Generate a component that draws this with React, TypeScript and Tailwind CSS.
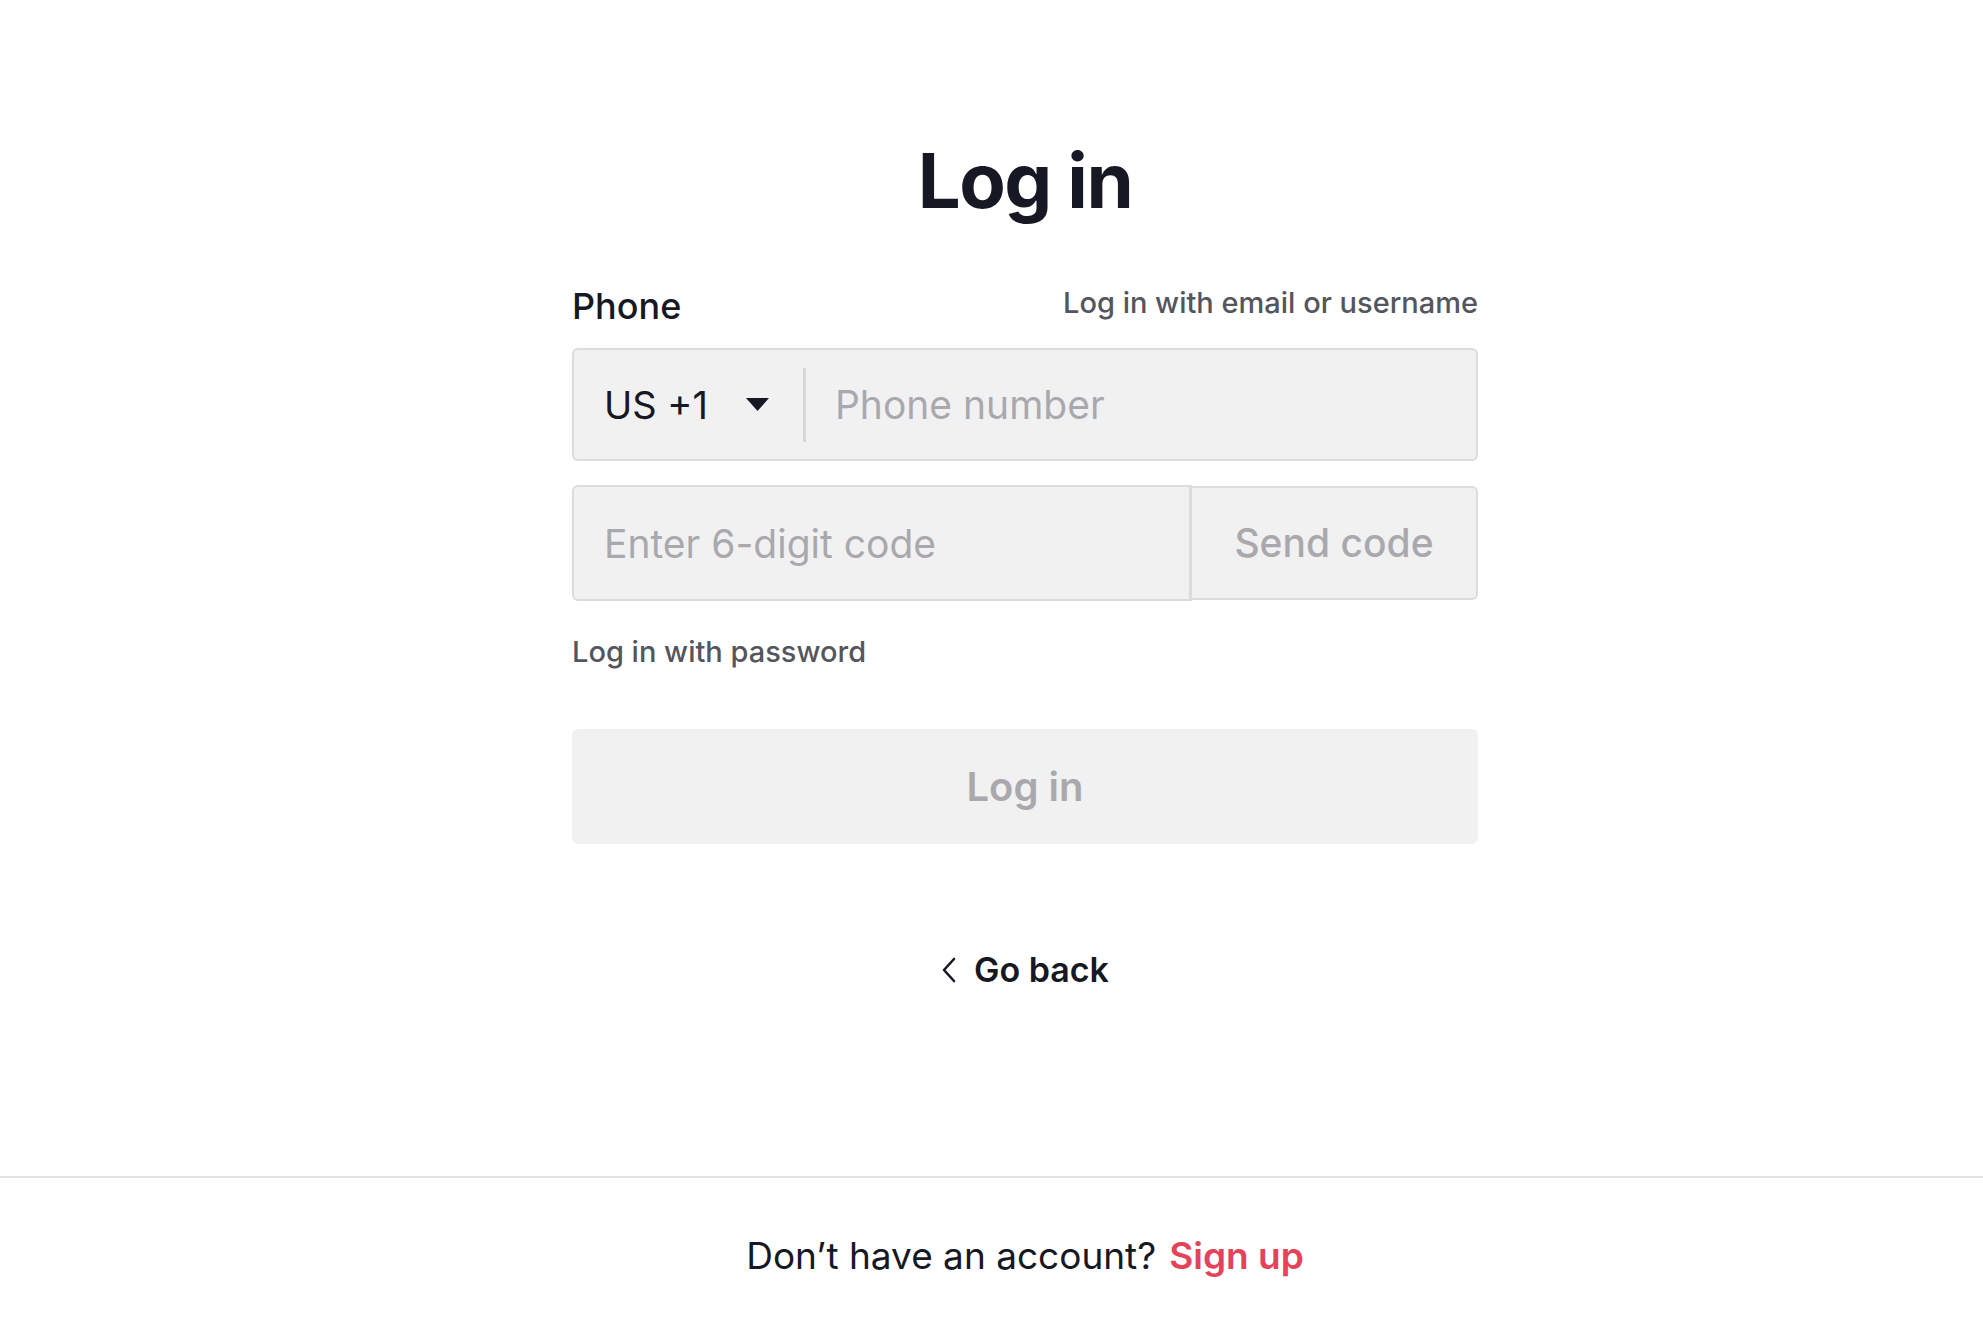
import { useState } from "react";

function ChevronLeft() {
  return (
    <svg width="16" height="26" viewBox="0 0 16 26" fill="none">
      <path d="M13 2L3 13L13 24" stroke="#161823" strokeWidth="2.6" strokeLinecap="round" strokeLinejoin="round" />
    </svg>
  );
}

export default function App() {
  const [phone, setPhone] = useState("");
  const [code, setCode] = useState("");

  return (
    <div className="min-h-screen bg-white text-[#161823]" style={{ fontFamily: "Inter, 'Liberation Sans', sans-serif" }}>
      <div className="pl-[67px]">
        <div className="mx-auto flex w-[906px] flex-col pt-[142px]">
          <h1 className="text-center text-[76px] font-bold leading-none tracking-[-0.02em]">Log in</h1>

          <div className="mt-[70px] flex items-start justify-between">
            <span className="text-[36px] font-medium leading-none">Phone</span>
            <a href="#" className="text-[29px] font-medium leading-none text-[#55555d]">
              Log in with email or username
            </a>
          </div>

          <div className="mt-[24px] flex h-[113px] items-center rounded-[6px] border-2 border-[#dcdcdd] bg-[#f1f1f2]">
            <button className="flex h-full items-center gap-[38px] pl-[30px] pr-[34px] text-[38px] leading-none">
              US +1
              <svg width="23" height="13" viewBox="0 0 23 13">
                <path d="M0 0H23L11.5 13Z" fill="#161823" />
              </svg>
            </button>
            <div className="h-[74px] w-[3px] bg-[#d6d6d8]" />
            <input
              value={phone}
              onChange={(e) => setPhone(e.target.value)}
              placeholder="Phone number"
              className="h-full flex-1 bg-transparent pl-[29px] text-[39px] outline-none placeholder:text-[#a9a9ad]"
            />
          </div>

          <div className="mt-[24px] flex h-[116px]">
            <input
              value={code}
              onChange={(e) => setCode(e.target.value)}
              placeholder="Enter 6-digit code"
              className="h-full w-[620px] rounded-l-[6px] border-2 border-r-[3px] border-[#dcdcdd] bg-[#f1f1f2] pl-[30px] text-[39px] outline-none placeholder:text-[#a9a9ad]"
            />
            <button className="my-px flex flex-1 items-center justify-center rounded-r-[6px] border-2 border-l-0 border-[#dcdcdd] bg-[#f1f1f2] text-[39px] font-medium text-[#a9a9ad]">
              Send code
            </button>
          </div>

          <a href="#" className="mt-[36px] self-start text-[29px] font-medium leading-none text-[#55555d]">
            Log in with password
          </a>

          <button className="mt-[63px] h-[115px] rounded-[6px] bg-[#f1f1f2] text-[40px] font-semibold text-[#a9a9ad]">
            Log in
          </button>

          <a href="#" className="mt-[109px] flex items-center justify-center gap-[17px] self-center text-[34px] font-semibold leading-none">
            <ChevronLeft />
            Go back
          </a>
        </div>
      </div>

      <div className="mt-[189px] border-t-2 border-[#e3e3e4]">
        <div className="flex justify-center gap-[13px] pl-[67px] pt-[59px] text-[37px] leading-none">
          <span>Don’t have an account?</span>
          <a href="#" className="font-semibold text-[#e4435a]">
            Sign up
          </a>
        </div>
      </div>
    </div>
  );
}
